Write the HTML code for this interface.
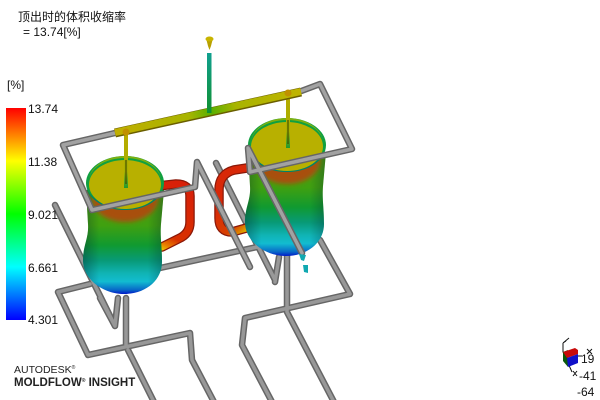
<!DOCTYPE html>
<html>
<head>
<meta charset="utf-8">
<style>
html,body{margin:0;padding:0;background:#fff;width:600px;height:400px;overflow:hidden}
svg{position:absolute;left:0;top:0}
text{font-family:"Liberation Sans","Noto Sans CJK SC",sans-serif;font-size:12px;fill:#111}
.p{fill:none;stroke-linejoin:round;stroke-linecap:round}
</style>
</head>
<body>
<svg width="600" height="400" viewBox="0 0 600 400">
<defs>
<linearGradient id="leg" x1="0" y1="0" x2="0" y2="1">
<stop offset="0" stop-color="#ff0000"/><stop offset=".25" stop-color="#ffff00"/><stop offset=".5" stop-color="#00ff00"/><stop offset=".75" stop-color="#00ffff"/><stop offset="1" stop-color="#0000ff"/>
</linearGradient>
<linearGradient id="body" x1="0" y1="0" x2="0" y2="1">
<stop offset="0" stop-color="#50a010"/><stop offset=".34" stop-color="#40a010"/><stop offset=".53" stop-color="#109a30"/><stop offset=".68" stop-color="#089a78"/><stop offset=".8" stop-color="#10b4b4"/><stop offset=".88" stop-color="#12bcd0"/><stop offset=".96" stop-color="#0868c8"/><stop offset="1" stop-color="#0018c8"/>
</linearGradient>
<linearGradient id="shade" x1="0" y1="0" x2="1" y2="0">
<stop offset="0" stop-color="#002030" stop-opacity=".35"/><stop offset=".2" stop-color="#002030" stop-opacity="0"/><stop offset=".8" stop-color="#002030" stop-opacity="0"/><stop offset="1" stop-color="#002030" stop-opacity=".3"/>
</linearGradient>
<linearGradient id="run" gradientUnits="userSpaceOnUse" x1="115" y1="133" x2="300" y2="92">
<stop offset="0" stop-color="#c0ae00"/><stop offset=".4" stop-color="#a8b400"/><stop offset=".52" stop-color="#58b000"/><stop offset=".65" stop-color="#a8b400"/><stop offset="1" stop-color="#c0b400"/>
</linearGradient>
<linearGradient id="spr" x1="0" y1="0" x2="0" y2="1">
<stop offset="0" stop-color="#10a090"/><stop offset=".5" stop-color="#109860"/><stop offset="1" stop-color="#109030"/>
</linearGradient>
<linearGradient id="dropg" x1="0" y1="0" x2="0" y2="1">
<stop offset="0" stop-color="#b8aa00"/><stop offset=".7" stop-color="#a8b000"/><stop offset="1" stop-color="#209a30"/>
</linearGradient>
<linearGradient id="hl" gradientUnits="userSpaceOnUse" x1="190" y1="190" x2="160" y2="250">
<stop offset="0" stop-color="#d82008"/><stop offset=".75" stop-color="#d83000"/><stop offset=".9" stop-color="#e88000"/><stop offset="1" stop-color="#e8d000"/>
</linearGradient>
<linearGradient id="hr" gradientUnits="userSpaceOnUse" x1="225" y1="200" x2="250" y2="228">
<stop offset="0" stop-color="#d82808"/><stop offset=".7" stop-color="#d84000"/><stop offset="1" stop-color="#e0b000"/>
</linearGradient>
<filter id="b1" x="-20%" y="-20%" width="140%" height="140%"><feGaussianBlur stdDeviation="2.500"/></filter>
<g id="jug">
<path d="M86 190 L88 224 C89 238 83 245 83 260 C83 280 104 294 124 294 C146 294 162 280 162 262 C162 245 160 238 161 224 L164 190 Z" fill="url(#body)"/>
<path d="M86 190 L88 224 C89 238 83 245 83 260 C83 280 104 294 124 294 C146 294 162 280 162 262 C162 245 160 238 161 224 L164 190 Z" fill="url(#shade)"/>
<ellipse cx="125" cy="199" rx="33" ry="23" fill="#a85010" filter="url(#b1)"/>
<ellipse cx="125" cy="183" rx="39" ry="27" fill="#10a040"/>
<path d="M86 183 A39 27 0 0 0 164 183 A38 24 0 0 1 86 183Z" fill="#00806a"/>
<ellipse cx="125" cy="184.500" rx="36" ry="24.500" fill="#b8b000"/>
<path d="M89 181 A36 23 0 0 1 161 181 A36 25 0 0 0 89 181Z" fill="#80b010"/>
</g>
</defs>

<!-- rear pipes -->
<g class="p" stroke="#666" stroke-width="6.500">
<path d="M55 205L115 326L118 298M100 298L115 326M126 298V345M58 292L90 284M160 268L257 247M58 292L88 355L190 333L192 360L214 402M128 350L154 402M320 240L350 294L245 318L242 345L272 402M287 255V312L334 402M279 257L275 282M216 163L275 280"/>
</g>
<g class="p" stroke="#989898" stroke-width="3.500">
<path d="M55 205L115 326L118 298M100 298L115 326M126 298V345M58 292L90 284M160 268L257 247M58 292L88 355L190 333L192 360L214 402M128 350L154 402M320 240L350 294L245 318L242 345L272 402M287 255V312L334 402M279 257L275 282M216 163L275 280"/>
</g>

<!-- handles -->
<path class="p" d="M158 186L176 184Q190 184 190 196V222Q190 234 178 239L162 247" stroke="#8a1808" stroke-width="9.500" stroke-linecap="butt"/>
<path class="p" d="M158 186L176 184Q190 184 190 196V222Q190 234 178 239L162 247" stroke="url(#hl)" stroke-width="7" stroke-linecap="butt"/>
<path class="p" d="M247 168L234 170Q219 174 219 190V218Q219 232 232 232L250 227" stroke="#8a1808" stroke-width="9.500" stroke-linecap="butt"/>
<path class="p" d="M247 168L234 170Q219 174 219 190V218Q219 232 232 232L250 227" stroke="url(#hr)" stroke-width="7" stroke-linecap="butt"/>

<!-- jugs -->
<use href="#jug"/>
<use href="#jug" transform="translate(162,-38)"/>

<!-- drops -->
<rect x="124" y="133" width="4" height="55" fill="url(#dropg)"/>
<rect x="286" y="93" width="4" height="55" fill="url(#dropg)"/>
<rect x="125.500" y="160" width="1" height="24" fill="#304000"/>
<rect x="287.500" y="120" width="1" height="24" fill="#304000"/>

<!-- top pipes -->
<g class="p" stroke="#666" stroke-width="6.500">
<path d="M115 133L63 145L92 210L195 187L197 162L250 267M296 93L320 84L352 149L250 172L248 148L302 253"/>
</g>
<g class="p" stroke="#a2a2a2" stroke-width="3.500">
<path d="M115 133L63 145L92 210L195 187L197 162L250 267M296 93L320 84L352 149L250 172L248 148L302 253"/>
</g>

<!-- runner and sprue -->
<path d="M115 133L301 92" stroke="#6a5e00" stroke-width="9" fill="none"/>
<path d="M115 132.500L301 91.500" stroke="url(#run)" stroke-width="7" fill="none"/>
<rect x="207" y="53" width="4.500" height="60" fill="url(#spr)"/>
<path d="M206 38H213L211 46L209.500 50L208 46Z" fill="#b8a000"/>
<ellipse cx="209.500" cy="39" rx="4" ry="2.500" fill="#c8b400"/>
<circle cx="126" cy="132" r="3.500" fill="#c09000"/>
<circle cx="288" cy="93" r="3.500" fill="#c09000"/>

<!-- cyan drip -->
<path d="M299 254L306 255L304 261L301 260ZM303 265H308L308 273L304 272Z" fill="#10a8b0"/>

<!-- legend -->
<rect x="6" y="108" width="20" height="212" fill="url(#leg)"/>
<text x="28" y="113">13.74</text>
<text x="28" y="166">11.38</text>
<text x="28" y="219">9.021</text>
<text x="28" y="272">6.661</text>
<text x="28" y="324">4.301</text>
<text x="7" y="89">[%]</text>
<text x="18" y="21">顶出时的体积收缩率</text>
<text x="23" y="36">= 13.74[%]</text>

<!-- branding -->
<text x="14" y="373" style="font-size:10.500px;fill:#222">AUTODESK<tspan font-size="5" dy="-4">®</tspan></text>
<text x="14" y="386" style="font-size:11.500px;font-weight:bold;fill:#222">MOLDFLOW<tspan font-size="5" dy="-4">®</tspan><tspan dy="4"> INSIGHT</tspan></text>

<!-- triad -->
<path d="M563 352L572 372M563 352V343M563 343L569 338M563 343L566 341" stroke="#111" stroke-width="1" fill="none"/>
<path d="M563 352L568 350L568 367L563 361Z" fill="#0a5a0a"/>
<path d="M563 352L575 348L578 350L578 354L567 358Z" fill="#c80a0a"/>
<path d="M567 358L578 354L578 363L568 367Z" fill="#1010c8"/>
<path d="M578 356H582" stroke="#111" fill="none"/>
<text x="581" y="363">19</text>
<text x="579" y="380">-41</text>
<text x="577" y="396">-64</text>
<path d="M587 349L592 354M592 349L587 354M573 371L577 376M577 371L573 376" stroke="#111" stroke-width="1" fill="none"/>
</svg>
</body>
</html>
